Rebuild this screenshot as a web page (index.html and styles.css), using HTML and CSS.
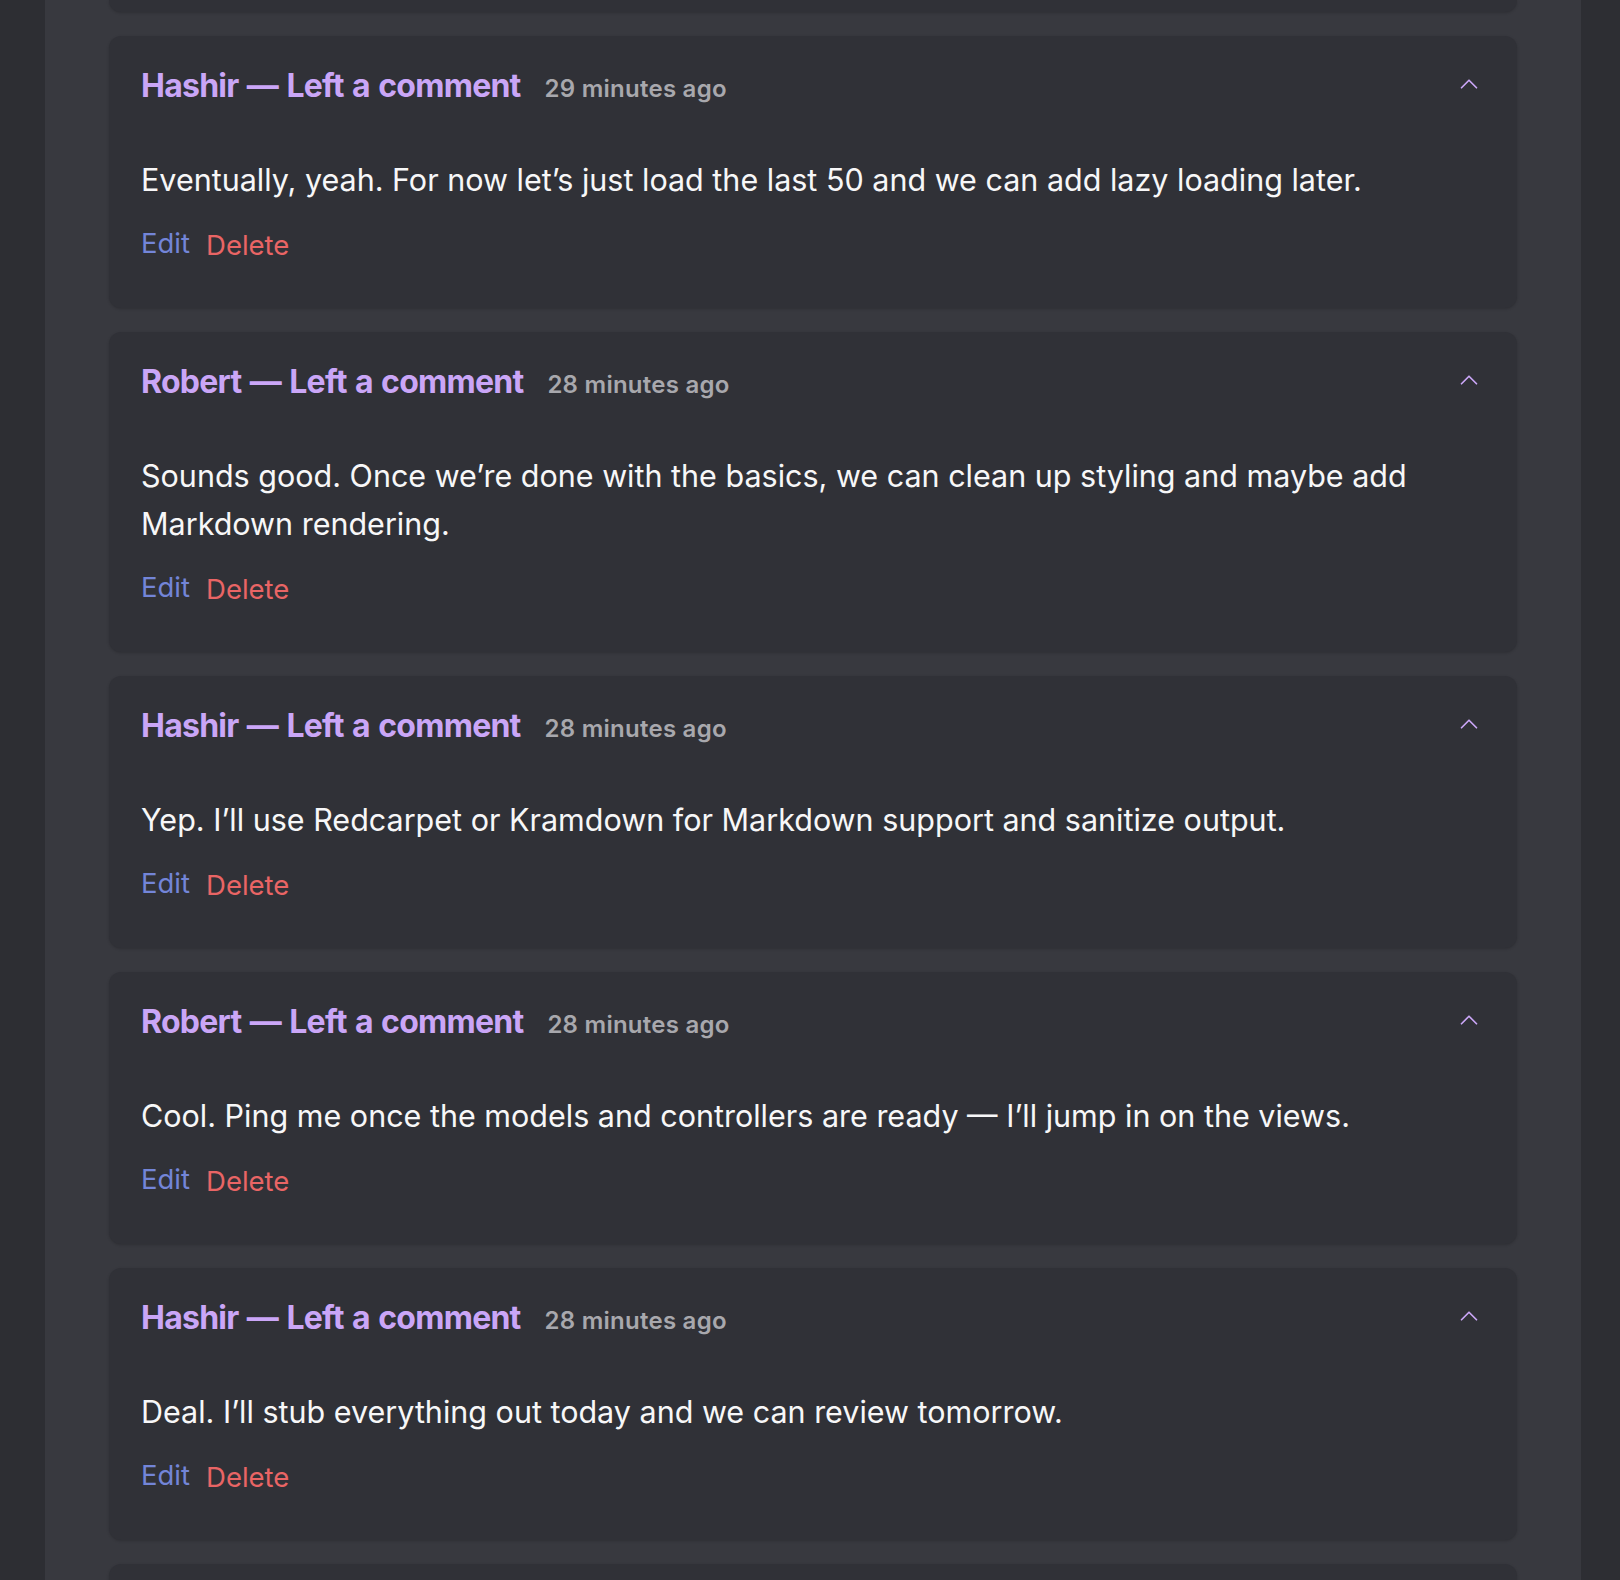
FILE: index.html
```html
<!DOCTYPE html>
<html lang="en">
<head>
<meta charset="utf-8">
<title>Comments</title>
<link rel="stylesheet" href="styles.css">
</head>
<body>
<main class="panel">
  <div class="list">
    <div class="card card-stub"></div>

    <article class="card">
      <header class="card-head">
        <div class="meta">
          <h3 class="title">Hashir — Left a comment</h3>
          <span class="time">29 minutes ago</span>
        </div>
        <button class="toggle" type="button" aria-label="Collapse">
          <svg viewBox="0 0 24 24" width="24" height="24" fill="none" stroke="currentColor" stroke-width="1.7" stroke-linecap="round" stroke-linejoin="round"><path d="M4.5 15.75 12 8.25l7.5 7.5"/></svg>
        </button>
      </header>
      <p class="body">Eventually, yeah. For now let’s just load the last 50 and we can add lazy loading later.</p>
      <div class="actions">
        <a class="edit" href="#">Edit</a>
        <form class="del-form"><button class="delete" type="button">Delete</button></form>
      </div>
    </article>

    <article class="card">
      <header class="card-head">
        <div class="meta">
          <h3 class="title">Robert — Left a comment</h3>
          <span class="time">28 minutes ago</span>
        </div>
        <button class="toggle" type="button" aria-label="Collapse">
          <svg viewBox="0 0 24 24" width="24" height="24" fill="none" stroke="currentColor" stroke-width="1.7" stroke-linecap="round" stroke-linejoin="round"><path d="M4.5 15.75 12 8.25l7.5 7.5"/></svg>
        </button>
      </header>
      <p class="body">Sounds good. Once we’re done with the basics, we can clean up styling and maybe add Markdown rendering.</p>
      <div class="actions">
        <a class="edit" href="#">Edit</a>
        <form class="del-form"><button class="delete" type="button">Delete</button></form>
      </div>
    </article>

    <article class="card">
      <header class="card-head">
        <div class="meta">
          <h3 class="title">Hashir — Left a comment</h3>
          <span class="time">28 minutes ago</span>
        </div>
        <button class="toggle" type="button" aria-label="Collapse">
          <svg viewBox="0 0 24 24" width="24" height="24" fill="none" stroke="currentColor" stroke-width="1.7" stroke-linecap="round" stroke-linejoin="round"><path d="M4.5 15.75 12 8.25l7.5 7.5"/></svg>
        </button>
      </header>
      <p class="body">Yep. I’ll use Redcarpet or Kramdown for Markdown support and sanitize output.</p>
      <div class="actions">
        <a class="edit" href="#">Edit</a>
        <form class="del-form"><button class="delete" type="button">Delete</button></form>
      </div>
    </article>

    <article class="card">
      <header class="card-head">
        <div class="meta">
          <h3 class="title">Robert — Left a comment</h3>
          <span class="time">28 minutes ago</span>
        </div>
        <button class="toggle" type="button" aria-label="Collapse">
          <svg viewBox="0 0 24 24" width="24" height="24" fill="none" stroke="currentColor" stroke-width="1.7" stroke-linecap="round" stroke-linejoin="round"><path d="M4.5 15.75 12 8.25l7.5 7.5"/></svg>
        </button>
      </header>
      <p class="body">Cool. Ping me once the models and controllers are ready — I’ll jump in on the views.</p>
      <div class="actions">
        <a class="edit" href="#">Edit</a>
        <form class="del-form"><button class="delete" type="button">Delete</button></form>
      </div>
    </article>

    <article class="card">
      <header class="card-head">
        <div class="meta">
          <h3 class="title">Hashir — Left a comment</h3>
          <span class="time">28 minutes ago</span>
        </div>
        <button class="toggle" type="button" aria-label="Collapse">
          <svg viewBox="0 0 24 24" width="24" height="24" fill="none" stroke="currentColor" stroke-width="1.7" stroke-linecap="round" stroke-linejoin="round"><path d="M4.5 15.75 12 8.25l7.5 7.5"/></svg>
        </button>
      </header>
      <p class="body">Deal. I’ll stub everything out today and we can review tomorrow.</p>
      <div class="actions">
        <a class="edit" href="#">Edit</a>
        <form class="del-form"><button class="delete" type="button">Delete</button></form>
      </div>
    </article>

    <div class="card card-tail"></div>
  </div>
</main>
</body>
</html>
```

FILE: styles.css
```css
* { box-sizing: border-box; }

html, body {
  margin: 0;
  padding: 0;
  height: 100%;
  overflow: hidden;
}

body {
  background: #2d2e33;
  font-family: "Inter", "Noto Sans", sans-serif;
  color: #f4f4f5;
}

.panel {
  width: 1536px;
  margin-left: 45px;
  min-height: 100%;
  background: #38393f;
  padding: 0 64px;
}

.list {
  display: flex;
  flex-direction: column;
  gap: 24px;
}

.card {
  background: #303137;
  border-radius: 12px;
  padding: 32px;
  box-shadow: 0 1px 3px rgba(0, 0, 0, 0.18);
  flex-shrink: 0;
}

.card-stub {
  height: 12px;
  padding: 0;
  border-radius: 0 0 12px 12px;
}

.card-tail {
  height: 60px;
  padding: 0;
}

.card-head {
  display: flex;
  align-items: center;
  justify-content: space-between;
  height: 32px;
}

.meta {
  display: flex;
  align-items: baseline;
  gap: 24px;
  margin-top: 4px;
}

.title {
  margin: 0;
  font-size: 32px;
  line-height: 32px;
  font-weight: 700;
  letter-spacing: -0.75px;
  word-spacing: 1.5px;
  color: #caa6f7;
}

.time {
  font-size: 24px;
  font-weight: 600;
  letter-spacing: 0.25px;
  color: #a8a8ad;
}

.toggle {
  background: none;
  border: 0;
  padding: 4px;
  width: 32px;
  height: 32px;
  color: #caa6f7;
  display: flex;
  align-items: center;
  justify-content: center;
  cursor: pointer;
}

.toggle svg { display: block; }

.body {
  margin: 56px 0 0;
  font-size: 30.5px;
  line-height: 48px;
  font-weight: 400;
  color: #f7f7f8;
}

.actions {
  margin-top: 21px;
  height: 51px;
  display: flex;
  align-items: flex-start;
  gap: 16px;
}

.edit {
  font-size: 27.5px;
  line-height: 36px;
  color: #7385d8;
  text-decoration: none;
}

.del-form { margin: 0; }

.delete {
  font-family: inherit;
  font-size: 27.5px;
  line-height: 36px;
  padding: 2px 0 0;
  margin: 0;
  border: 0;
  background: none;
  color: #e96565;
  cursor: pointer;
}
```
